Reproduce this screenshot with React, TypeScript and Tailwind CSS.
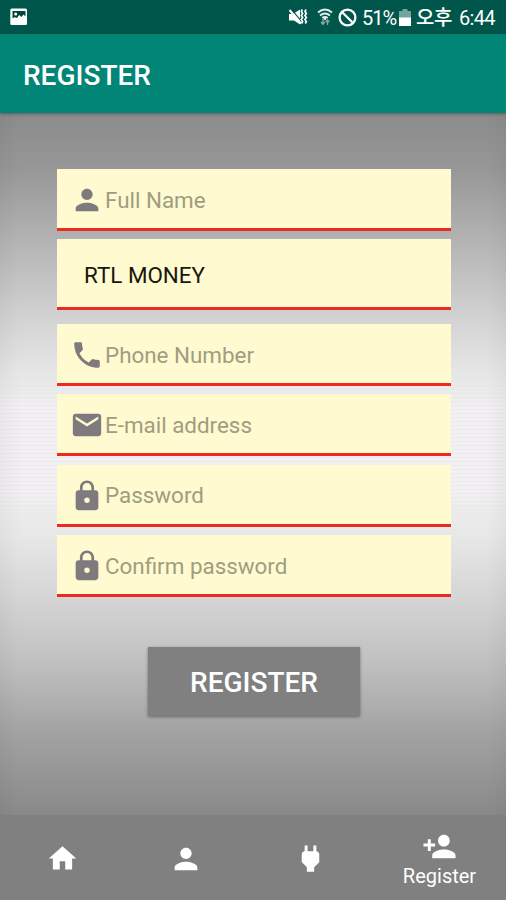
import type { ReactNode } from 'react';
import type { IconType } from 'react-icons';
import { MdEmail, MdHome, MdLock, MdPerson, MdPersonAdd, MdPhone, MdPower } from 'react-icons/md';

interface FieldProps {
  icon: IconType;
  label: string;
}

const Field = ({ icon: Icon, label }: FieldProps) => {
  return (
    <label className="flex h-[62px] items-center border-b-[3px] border-[#ec2a22] bg-[#fffacf] pl-[13px] pt-[3px] text-[22.4px] text-[#a09d81]">
      <Icon className="mr-px size-[34px] shrink-0 text-[#7e7a7d]" />
      <span className="whitespace-nowrap pt-px">{label}</span>
    </label>
  );
};

const NavItem = ({ children }: { children: ReactNode }) => {
  return <button className="flex flex-col items-center justify-center pt-0.5">{children}</button>;
};

const StatusBar = () => {
  return (
    <div className="flex h-[34px] shrink-0 items-center bg-[#00564b] text-white">
      <svg className="ml-[10px] size-[18px] shrink-0" viewBox="0 0 18 18">
        <rect x="0.3" y="0.5" width="16.7" height="16.5" rx="1.5" fill="#fff" />
        <path d="M2.5 3h13v5.5l-2-2-2.2 2.5-2-2-2.5 3-2-.8-2.3 1z" fill="#00463c" />
        <circle cx="5.7" cy="5.9" r="1.5" fill="#fff" />
      </svg>

      <svg className="ml-[260px] h-[18px] w-5 shrink-0" viewBox="0 0 20 18">
        <path d="M1 6h4l7-4.5v15L6 12.5H1z" fill="#fff" />
        <path d="M3.2 1.2l10 12" stroke="#00564b" strokeWidth="1.2" />
        <path d="M1.5 2l11.5 13.5" stroke="#fff" strokeWidth="2" />
        <path d="M14.3 1.5l-1 2 1.3 2-1.3 2 1.3 2-1.3 2 1.3 2-1 2M18 1.5l-1 2 1.3 2-1.3 2 1.3 2-1.3 2 1.3 2-1 2" fill="none" stroke="#fff" strokeWidth="1.7" />
      </svg>

      <svg className="ml-[9px] h-[18px] w-4 shrink-0" viewBox="0 0 16 18" fill="none">
        <path d="M1 4.5q7-6 14 0M3 7.4q5-4 10 0M5.2 10q2.8-2.2 5.6 0" stroke="#e2eeec" strokeWidth="1.9" />
        <path d="M8 10v2" stroke="#e2eeec" strokeWidth="2" />
        <path d="M6 11v5m-2-2l2 2.3L7.7 14M10.5 17v-4.8M8.7 14l1.8-2 1.8 2" stroke="#83aaa4" strokeWidth="1.4" />
      </svg>

      <svg className="ml-[5px] size-[19px] shrink-0" viewBox="0 0 19 19" fill="none" stroke="#fff" strokeWidth="2.3">
        <circle cx="9.5" cy="9.5" r="7.9" />
        <path d="M4 4l11 11" />
      </svg>

      <span className="ml-[5px] w-[34px] shrink-0 pt-0.5 text-[20px] tracking-[-1px]">51%</span>

      <svg className="ml-[3px] h-[17px] w-3 shrink-0" viewBox="0 0 12 17">
        <path d="M3.5 0h5v2H12v7H0V2h3.5z" fill="#6fa79e" />
        <path d="M0 8.5h12V17H0z" fill="#fff" />
      </svg>

      <span className="ml-[5px] shrink-0 whitespace-nowrap pt-0.5 text-[20px] font-medium tracking-[-0.4px]">오후</span>
      <span className="ml-[7px] shrink-0 whitespace-nowrap pt-0.5 text-[20px] tracking-[-0.7px]">6:44</span>
    </div>
  );
};

export default function App() {
  return (
    <div className="flex h-[900px] w-[506px] flex-col overflow-hidden font-['Roboto','Noto_Sans_CJK_KR',sans-serif]">
      <StatusBar />

      <header className="z-10 flex h-[79px] shrink-0 items-center bg-[#008577] pl-[23px] pt-1 shadow-[0_1px_3px_rgba(0,0,0,0.35)]">
        <h1 className="text-[28px] font-medium text-white">REGISTER</h1>
      </header>

      {/* brushed metal: vertical sheen, darker side edges, fine lines through the bright band */}
      <main className="flex h-[702px] shrink-0 flex-col items-center bg-[linear-gradient(90deg,rgba(0,0,0,0.035),transparent_4%,transparent_96%,rgba(0,0,0,0.035)),linear-gradient(180deg,#8b8b8b_0%,#979797_8%,#b3b3b3_18%,#d2d2d2_29%,#e6e6e6_37%,transparent_42%,transparent_54%,#e8e8e8_60%,#d3d3d3_70%,#bebebe_79%,#a3a3a3_88%,#898989_100%),repeating-linear-gradient(180deg,#e9e8e9_0px,#f3f1f3_2px,#f1eff1_4px)] pl-0.5 pt-14">
        <form className="flex w-[394px] flex-col">
          <Field icon={MdPerson} label="Full Name" />
          <div className="mb-[14px] mt-2 flex h-[71px] items-center border-b-[3px] border-[#ec2a22] bg-[#fffacf] pl-[27px] pt-[5px] text-[22.4px] text-[#171710]">
            RTL MONEY
          </div>
          <div className="flex flex-col gap-[8.4px]">
            <Field icon={MdPhone} label="Phone Number" />
            <Field icon={MdEmail} label="E-mail address" />
            <Field icon={MdLock} label="Password" />
            <Field icon={MdLock} label="Confirm password" />
          </div>
        </form>

        <button className="mt-[50px] h-[69px] w-[212px] bg-[#808080] pt-0.5 text-[28px] font-medium text-white shadow-[0_1px_3px_rgba(0,0,0,0.4)]">
          REGISTER
        </button>
      </main>

      <nav className="grid h-[85px] shrink-0 grid-cols-[124px_124px_124px_134px] bg-[#808080] text-white">
        <NavItem>
          <MdHome className="size-[33px]" />
        </NavItem>
        <NavItem>
          <MdPerson className="size-[34px]" />
        </NavItem>
        <NavItem>
          <MdPower className="size-[35px]" />
        </NavItem>
        <NavItem>
          <MdPersonAdd className="size-[35px]" />
          <span className="pl-px text-[20px] leading-6">Register</span>
        </NavItem>
      </nav>
    </div>
  );
}
